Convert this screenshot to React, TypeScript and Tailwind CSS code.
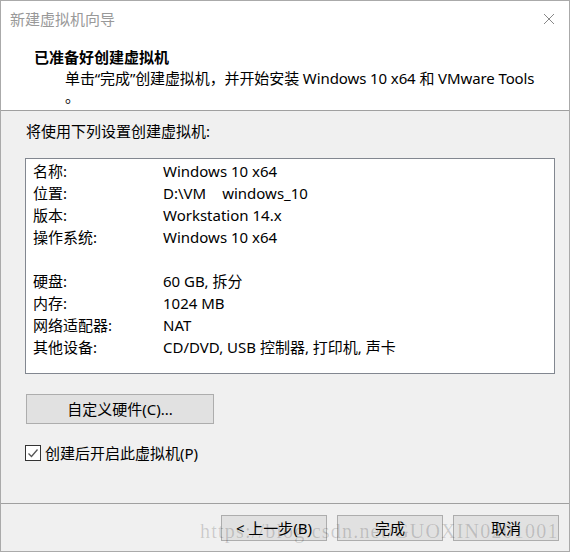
import React from 'react';

const rows: [string, React.ReactNode][] = [
  ['名称:', 'Windows 10 x64'],
  ['位置:', <>D:\VM<span className="ml-[16px]">windows_10</span></>],
  ['版本:', 'Workstation 14.x'],
  ['操作系统:', 'Windows 10 x64'],
];

const rows2: [string, string][] = [
  ['硬盘:', '60 GB, 拆分'],
  ['内存:', '1024 MB'],
  ['网络适配器:', 'NAT'],
  ['其他设备:', 'CD/DVD, USB 控制器, 打印机, 声卡'],
];

const Row = ({ label, value }: { label: string; value: React.ReactNode }) => (
  <div className="flex h-[22px] leading-[22px]">
    <div className="w-[130px]">{label}</div>
    <div>{value}</div>
  </div>
);

const Btn = ({ children, className = '' }: { children: React.ReactNode; className?: string }) => (
  <div className={`flex items-center justify-center bg-[#e1e1e1] border border-[#adadad] text-black ${className}`}>
    {children}
  </div>
);

export default function App() {
  return (
    <div
      className="relative w-[570px] h-[552px] border border-[#aaaaaa] bg-[#f0f0f0] flex flex-col text-[15px] text-black overflow-hidden"
      style={{ fontFamily: '"Noto Sans", "Noto Sans CJK SC", sans-serif' }}
    >
      {/* Header */}
      <div className="bg-white h-[110px] border-b border-[#a0a0a0] relative">
        <div className="pt-[8px] pl-[9px] leading-[20px] text-[#999999]">新建虚拟机向导</div>
        <svg className="absolute left-[542px] top-[12px] w-[12px] h-[12px]" viewBox="0 0 12 12">
          <path d="M1 1 L11 11 M11 1 L1 11" stroke="#888" strokeWidth="1" fill="none" />
        </svg>
        <div className="mt-[18px] pl-[33px] leading-[20px] font-bold">已准备好创建虚拟机</div>
        <div className="pl-[64px] leading-[18px] mt-[2px] tracking-[-0.1px]">
          单击“完成”创建虚拟机，并开始安装 Windows 10 x64 和 VMware Tools
          <br />。
        </div>
      </div>

      {/* Body */}
      <div className="flex-1 px-[24px] pt-[10px]">
        <div className="leading-[20px] pl-[1px]">将使用下列设置创建虚拟机:</div>
        <div className="mt-[17px] w-[530px] h-[216px] bg-white border border-[#828790] pl-[7px] pt-[1px]">
          {rows.map(([l, v]) => (
            <Row key={l} label={l} value={v} />
          ))}
          <div className="h-[22px]" />
          {rows2.map(([l, v]) => (
            <Row key={l} label={l} value={v} />
          ))}
        </div>
        <Btn className="mt-[20px] ml-[1px] w-[188px] h-[30px]">自定义硬件(C)...</Btn>
        <div className="mt-[19px] flex items-center gap-[4px]">
          <div className="w-[16px] h-[16px] border border-[#333333] bg-white flex items-center justify-center">
            <svg viewBox="0 0 12 12" className="w-[12px] h-[12px]">
              <path d="M1.5 6.5 L4.5 9.5 L10.5 2.5" stroke="#555" strokeWidth="1.3" fill="none" />
            </svg>
          </div>
          <span className="leading-[20px]">创建后开启此虚拟机(P)</span>
        </div>
      </div>

      {/* Footer */}
      <div className="border-t border-[#a0a0a0] h-[48px] pt-[11px] pr-[10px] flex justify-end gap-[10px]">
        <Btn className="w-[106px] h-[26px]">&lt; 上一步(B)</Btn>
        <Btn className="w-[106px] h-[26px]">完成</Btn>
        <Btn className="w-[106px] h-[26px]">取消</Btn>
      </div>

      {/* Watermark */}
      <div
        className="absolute left-[199px] top-[520px] text-[20px] leading-[20px] tracking-[1.2px] text-black/[0.16] pointer-events-none whitespace-nowrap"
        style={{ fontFamily: '"Liberation Serif", serif' }}
      >
        https://blog.csdn.net/GUOXIN0201001
      </div>
    </div>
  );
}
